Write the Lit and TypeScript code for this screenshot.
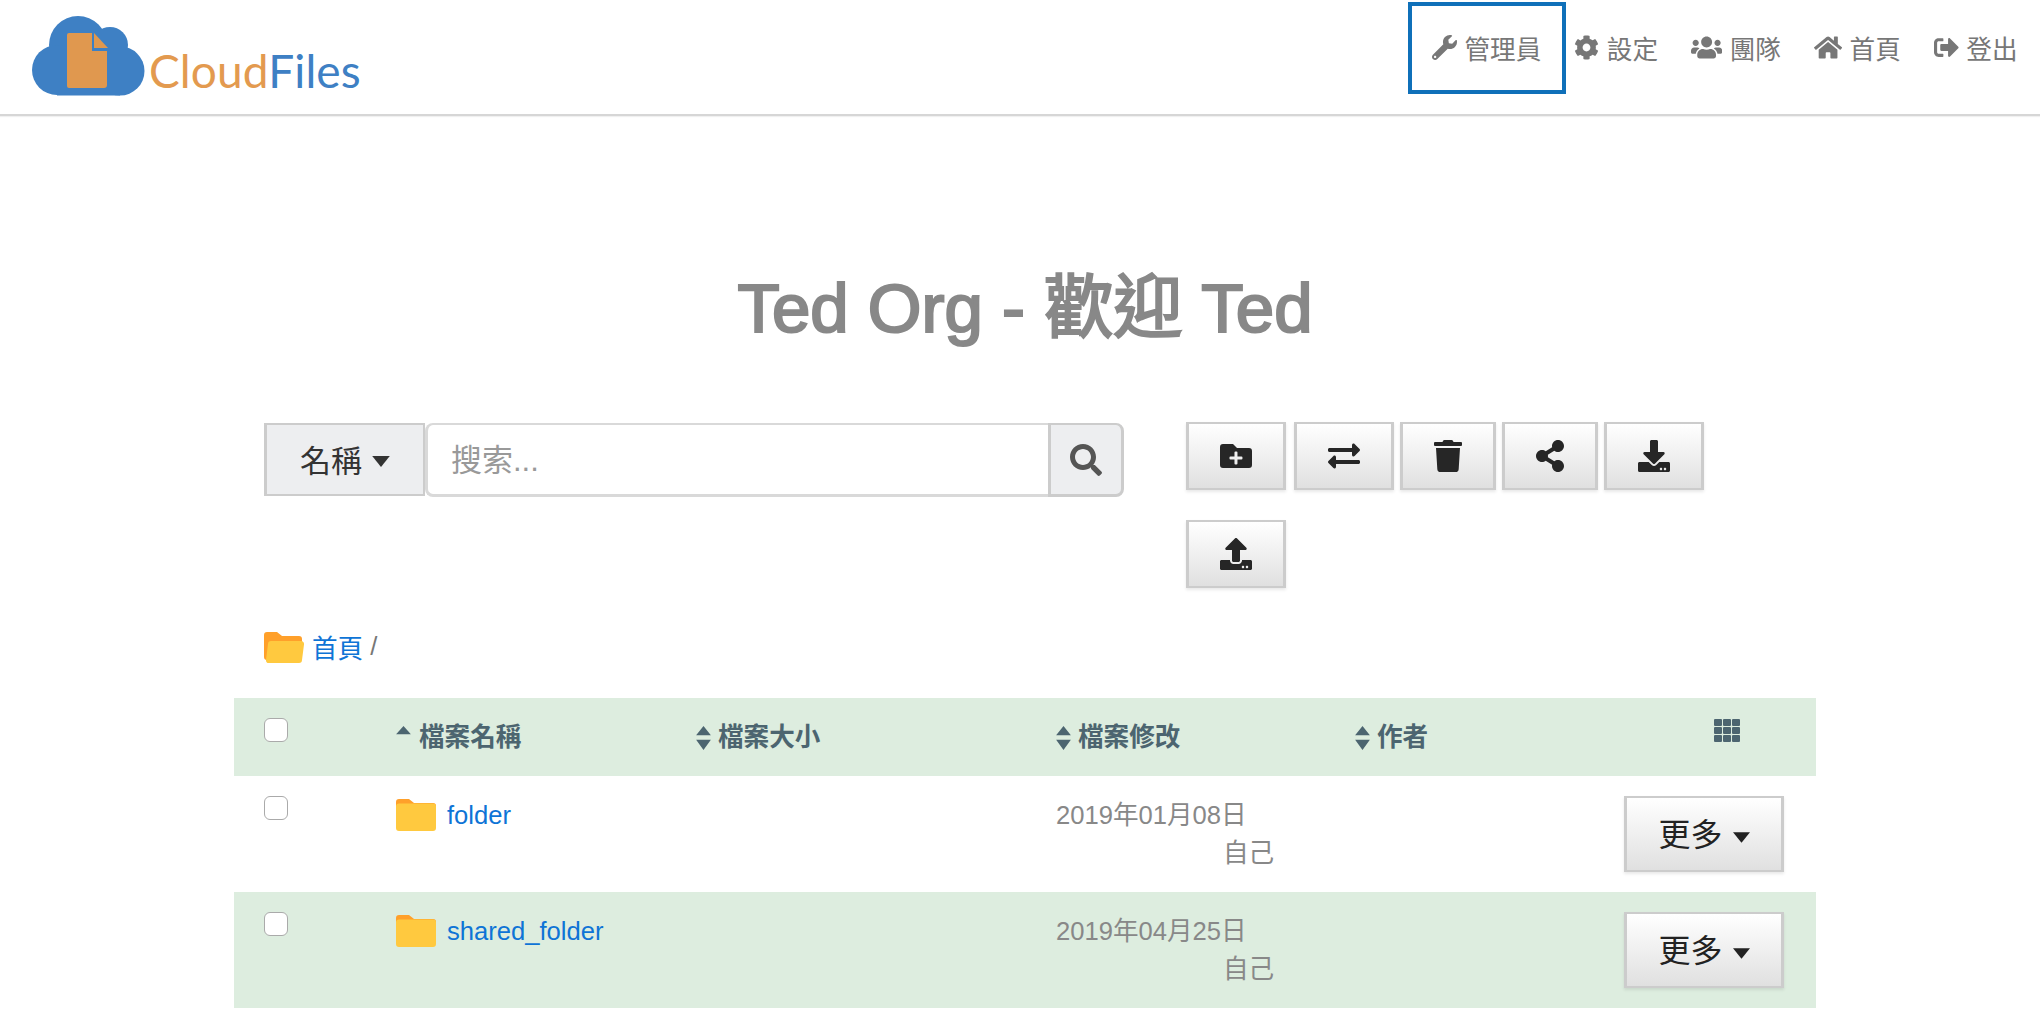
import { LitElement, html, css, svg } from "lit";
import { customElement } from "lit/decorators.js";

const P = {
  wrench: [512, "M507.73 109.1c-2.24-9.03-13.54-12.09-20.12-5.51l-74.36 74.36-67.88-11.31-11.31-67.88 74.36-74.36c6.62-6.62 3.43-17.9-5.66-20.16-47.38-11.74-99.55.91-136.58 37.93-39.64 39.64-50.55 97.1-34.05 147.2L18.74 402.76c-24.99 24.99-24.99 65.51 0 90.5 24.99 24.99 65.51 24.99 90.5 0l213.21-213.21c50.12 16.71 107.47 5.68 147.37-34.22 37.07-37.07 49.7-89.32 37.91-136.73zM64 472c-13.25 0-24-10.75-24-24 0-13.26 10.75-24 24-24s24 10.74 24 24c0 13.25-10.75 24-24 24z"],
  cog: [512, "M487.4 315.7l-42.6-24.6c4.3-23.2 4.3-47 0-70.2l42.6-24.6c4.9-2.8 7.1-8.6 5.5-14-11.1-35.6-30-67.8-54.7-94.6-3.8-4.1-10-5.1-14.8-2.3L380.8 110c-17.9-15.4-38.5-27.3-60.8-35.1V25.8c0-5.6-3.9-10.5-9.4-11.7-36.7-8.2-74.3-7.8-109.2 0-5.5 1.2-9.4 6.1-9.4 11.7V75c-22.2 7.9-42.8 19.8-60.8 35.1L88.7 85.5c-4.9-2.8-11-1.9-14.8 2.3-24.7 26.7-43.6 58.9-54.7 94.6-1.7 5.4.6 11.2 5.5 14L67.3 221c-4.3 23.2-4.3 47 0 70.2l-42.6 24.6c-4.9 2.8-7.1 8.6-5.5 14 11.1 35.6 30 67.8 54.7 94.6 3.8 4.1 10 5.1 14.8 2.3l42.6-24.6c17.9 15.4 38.5 27.3 60.8 35.1v49.2c0 5.6 3.9 10.5 9.4 11.7 36.7 8.2 74.3 7.8 109.2 0 5.5-1.2 9.4-6.1 9.4-11.7v-49.2c22.2-7.9 42.8-19.8 60.8-35.1l42.6 24.6c4.9 2.8 11 1.9 14.8-2.3 24.7-26.7 43.6-58.9 54.7-94.6 1.5-5.5-.7-11.3-5.6-14.1zM256 336c-44.1 0-80-35.9-80-80s35.9-80 80-80 80 35.9 80 80-35.9 80-80 80z"],
  users: [640, "M96 224c35.3 0 64-28.7 64-64s-28.7-64-64-64-64 28.7-64 64 28.7 64 64 64zm448 0c35.3 0 64-28.7 64-64s-28.7-64-64-64-64 28.7-64 64 28.7 64 64 64zm32 32h-64c-17.6 0-33.5 7.1-45.1 18.6 40.3 22.1 68.9 62 75.1 109.4h66c17.7 0 32-14.3 32-32v-32c0-35.3-28.7-64-64-64zm-256 0c61.9 0 112-50.1 112-112S381.9 32 320 32 208 82.1 208 144s50.1 112 112 112zm76.8 32h-8.3c-20.8 10-43.9 16-68.5 16s-47.6-6-68.5-16h-8.3C179.6 288 128 339.6 128 403.2V432c0 26.5 21.5 48 48 48h288c26.5 0 48-21.5 48-48v-28.8c0-63.6-51.6-115.2-115.2-115.2zm-223.7-13.4C161.5 263.1 145.6 256 128 256H64c-35.3 0-64 28.7-64 64v32c0 17.7 14.3 32 32 32h65.9c6.3-47.4 34.9-87.3 75.2-109.4z"],
  home: [576, "M280.37 148.26L96 300.11V464a16 16 0 0 0 16 16l112.06-.29a16 16 0 0 0 15.92-16V368a16 16 0 0 1 16-16h64a16 16 0 0 1 16 16v95.64a16 16 0 0 0 16 16.05L464 480a16 16 0 0 0 16-16V300L295.67 148.26a12.19 12.19 0 0 0-15.3 0zM571.6 251.47L488 182.56V44.05a12 12 0 0 0-12-12h-56a12 12 0 0 0-12 12v72.61L318.47 43a48 48 0 0 0-61 0L4.34 251.47a12 12 0 0 0-1.6 16.9l25.5 31A12 12 0 0 0 45.15 301l235.22-193.74a12.19 12.19 0 0 1 15.3 0L530.9 301a12 12 0 0 0 16.9-1.6l25.5-31a12 12 0 0 0-1.7-16.93z"],
  signout: [512, "M497 273L329 441c-15 15-41 4.5-41-17v-96H152c-13.3 0-24-10.7-24-24v-96c0-13.3 10.7-24 24-24h136V88c0-21.4 25.9-32 41-17l168 168c9.3 9.4 9.3 24.6 0 34zM192 436v-40c0-6.6-5.4-12-12-12H96c-17.7 0-32-14.3-32-32V160c0-17.7 14.3-32 32-32h84c6.6 0 12-5.4 12-12V76c0-6.6-5.4-12-12-12H96c-53 0-96 43-96 96v192c0 53 43 96 96 96h84c6.6 0 12-5.4 12-12z"],
  search: [512, "M505 442.7L405.3 343c-4.5-4.5-10.6-7-17-7H372c27.6-35.3 44-79.7 44-128C416 93.1 322.9 0 208 0S0 93.1 0 208s93.1 208 208 208c48.3 0 92.7-16.4 128-44v16.3c0 6.4 2.5 12.5 7 17l99.7 99.7c9.4 9.4 24.6 9.4 33.9 0l28.3-28.3c9.4-9.4 9.4-24.6.1-34zM208 336c-70.7 0-128-57.2-128-128 0-70.7 57.2-128 128-128 70.7 0 128 57.2 128 128 0 70.7-57.2 128-128 128z"],
  folderPlus: [512, "M464,128H272L208,64H48A48,48,0,0,0,0,112V400a48,48,0,0,0,48,48H464a48,48,0,0,0,48-48V176A48,48,0,0,0,464,128ZM359.5,296a16,16,0,0,1-16,16h-64v64a16,16,0,0,1-16,16h-16a16,16,0,0,1-16-16V312h-64a16,16,0,0,1-16-16V280a16,16,0,0,1,16-16h64V200a16,16,0,0,1,16-16h16a16,16,0,0,1,16,16v64h64a16,16,0,0,1,16,16Z"],
  exchange: [512, "M0 168v-16c0-13.255 10.745-24 24-24h360V80c0-21.367 25.899-32.042 40.971-16.971l80 80c9.372 9.373 9.372 24.569 0 33.941l-80 80C409.956 272.057 384 261.456 384 240v-48H24c-13.255 0-24-10.745-24-24zm488 152H128v-48c0-21.314-25.862-32.08-40.971-16.971l-80 80c-9.372 9.373-9.372 24.569 0 33.941l80 80C102.057 463.997 128 453.437 128 432v-48h360c13.255 0 24-10.745 24-24v-16c0-13.255-10.745-24-24-24z"],
  trash: [448, "M432 32H312l-9.4-18.7A24 24 0 0 0 281.1 0H166.8a23.72 23.72 0 0 0-21.4 13.3L136 32H16A16 16 0 0 0 0 48v32a16 16 0 0 0 16 16h416a16 16 0 0 0 16-16V48a16 16 0 0 0-16-16zM53.2 467a48 48 0 0 0 47.9 45h245.8a48 48 0 0 0 47.9-45L416 128H32z"],
  share: [448, "M352 320c-22.608 0-43.387 7.819-59.79 20.895l-102.486-64.054a96.551 96.551 0 0 0 0-41.683l102.486-64.054C308.613 184.181 329.392 192 352 192c53.019 0 96-42.981 96-96S405.019 0 352 0s-96 42.981-96 96c0 7.158.79 14.13 2.276 20.841L155.79 180.895C139.387 167.819 118.608 160 96 160c-53.019 0-96 42.981-96 96s42.981 96 96 96c22.608 0 43.387-7.819 59.79-20.895l102.486 64.054A96.301 96.301 0 0 0 256 416c0 53.019 42.981 96 96 96s96-42.981 96-96-42.981-96-96-96z"],
  download: [512, "M216 0h80c13.3 0 24 10.7 24 24v168h87.7c17.8 0 26.7 21.5 14.1 34.1L269.7 378.3c-7.5 7.5-19.8 7.5-27.3 0L90.1 226.1c-12.6-12.6-3.7-34.1 14.1-34.1H192V24c0-13.3 10.7-24 24-24zm296 376v112c0 13.3-10.7 24-24 24H24c-13.3 0-24-10.7-24-24V376c0-13.3 10.7-24 24-24h146.7l49 49c20.1 20.1 52.5 20.1 72.6 0l49-49H488c13.3 0 24 10.7 24 24zm-124 88c0-11-9-20-20-20s-20 9-20 20 9 20 20 20 20-9 20-20zm64 0c0-11-9-20-20-20s-20 9-20 20 9 20 20 20 20-9 20-20z"],
  upload: [512, "M296 384h-80c-13.3 0-24-10.7-24-24V192h-87.7c-17.8 0-26.7-21.5-14.1-34.1L242.3 5.7c7.5-7.5 19.8-7.5 27.3 0l152.2 152.2c12.6 12.6 3.7 34.1-14.1 34.1H320v168c0 13.3-10.7 24-24 24zm216-8v112c0 13.3-10.7 24-24 24H24c-13.3 0-24-10.7-24-24V376c0-13.3 10.7-24 24-24h136v8c0 30.9 25.1 56 56 56h80c30.9 0 56-25.1 56-56v-8h136c13.3 0 24 10.7 24 24zm-124 88c0-11-9-20-20-20s-20 9-20 20 9 20 20 20 20-9 20-20zm64 0c0-11-9-20-20-20s-20 9-20 20 9 20 20 20 20-9 20-20z"],
} as const;

const icon = (n: keyof typeof P, cls = "") => {
  const [w, d] = P[n];
  return html`<svg class="ic ${cls}" viewBox="0 0 ${w} 512" fill="currentColor"><path d=${d}></path></svg>`;
};

const caret = (cls = "") => html`<svg class="caret ${cls}" viewBox="0 0 16 10"><path d="M0 0h16L8 10z" fill="currentColor"></path></svg>`;

const sortBoth = html`<svg class="sort" viewBox="0 0 16 26"><path d="M8 0l8 10H0zM0 15h16l-8 11z" fill="currentColor"></path></svg>`;
const sortUp = html`<svg class="sort" viewBox="0 0 16 26"><path d="M8 0l8 9H0z" fill="currentColor"></path></svg>`;

const folderClosed = html`<svg class="folder" viewBox="0 0 40 32">
  <path d="M3 0h10l5 4h19a3 3 0 0 1 3 3v6H0V3a3 3 0 0 1 3-3z" fill="#ffa02a"></path>
  <path d="M3 4.500h34a3 3 0 0 1 3 3V29a3 3 0 0 1-3 3H3a3 3 0 0 1-3-3V7.500a3 3 0 0 1 3-3z" fill="#ffc93f"></path>
</svg>`;
const folderOpen = html`<svg class="crumb-folder" viewBox="0 0 40 31">
  <path d="M3 0h10l5 4h17a3 3 0 0 1 3 3v21H3a3 3 0 0 1-3-3V3a3 3 0 0 1 3-3z" fill="#ffa02a"></path>
  <path d="M7 9h30a3 3 0 0 1 3 3.500L38 28a3 3 0 0 1-3 3H3.500a3 3 0 0 1-1.500-3L4 12a3 3 0 0 1 3-3z" fill="#ffc93f"></path>
</svg>`;

@customElement("app-root")
export class AppRoot extends LitElement {
  static styles = css`
    :host {
      display: block;
      font-family: "Liberation Sans", "Noto Sans CJK TC", sans-serif;
      color: #333;
      background: #fff;
      min-height: 1024px;
    }
    .ic { display: block; height: 1em; flex: none; }
    a { text-decoration: none; color: #0e74d6; }

    header {
      height: 114px;
      display: flex;
      justify-content: space-between;
      border-bottom: 2px solid #d6d6d6;
      box-shadow: 0 1px 1px rgba(0,0,0,.06);
    }
    .brand { display: flex; align-items: flex-start; padding: 16px 0 0 32px; }
    .cloud { width: 113px; height: 80px; flex: none; }
    .wordmark {
      font-family: Lato, sans-serif;
      font-size: 46px;
      line-height: 56px;
      margin: 27px 0 0 4px;
      letter-spacing: .1px;
      color: #e39a4f;
    }
    .wordmark span { color: #3e80c4; }
    nav { display: flex; align-items: flex-start; padding: 10px 6px 0 0; }
    .nav-item {
      height: 76px;
      box-sizing: border-box;
      padding: 0 16.500px 2px;
      display: flex;
      align-items: center;
      gap: 7.500px;
      font-size: 25.600px;
      color: #777;
    }
    .nav-item .ic { height: 25px; }
    .nav-item.active { outline: 4px solid #0f70b9; outline-offset: 4.500px; }

    main { padding: 0 224px 0 234px; }
    h1 {
      margin: 0;
      padding-top: 153px;
      height: 154px;
      box-sizing: content-box;
      text-align: center;
      font-size: 69px;
      line-height: 80px;
      font-weight: 400;
      -webkit-text-stroke: 2.200px #888;
      color: #888;
    }
    .tools { display: flex; align-items: flex-start; padding-left: 30px; }
    .search { display: flex; width: 860px; height: 74px; flex: none; }
    .dropdown {
      width: 161px;
      height: 73px;
      box-sizing: border-box;
      padding-bottom: 2px;
      display: flex;
      align-items: center;
      justify-content: center;
      gap: 10px;
      background: #edeef0;
      border: solid #ccc;
      border-width: 2px 2px 2px 3px;
      font-size: 31px;
      color: #333;
    }
    .dropdown .caret { width: 18px; height: 11px; margin-top: 6px; }
    .search input {
      flex: 1;
      min-width: 0;
      margin: 0;
      box-sizing: border-box;
      height: 74px;
      border: solid #d9d9d9;
      border-width: 2px 0 3px 3px;
      border-radius: 8px 0 0 8px;
      padding: 2px 23px 0;
      font: 31px "Liberation Sans", "Noto Sans CJK TC", sans-serif;
      outline: none;
      background: #fff;
    }
    .search input::placeholder { color: #999; }
    .addon {
      width: 76px;
      box-sizing: border-box;
      display: flex;
      align-items: center;
      justify-content: center;
      background: #edeef0;
      border: solid #ccc;
      border-width: 2px 3px 3px;
      border-radius: 0 8px 8px 0;
      color: #555;
    }
    .addon .ic { height: 32px; }
    .actions {
      display: flex;
      flex-wrap: wrap;
      width: 530px;
      margin: -1px 0 0 62px;
      gap: 30px 6px;
    }
    .btn {
      height: 68px;
      box-sizing: border-box;
      display: flex;
      align-items: center;
      justify-content: center;
      border: solid #ccc;
      border-width: 2px 3px;
      background: linear-gradient(#fff, #e0e0e0);
      box-shadow: 0 2px 3px rgba(0,0,0,.09);
      color: #262626;
    }
    .btn .ic { height: 32px; }
    .w100 { width: 100px; }
    .w96 { width: 96px; }
    .first { margin-right: 2px; }
    .crumbs {
      display: flex;
      align-items: center;
      height: 32px;
      margin: 43px 0 35px;
      padding-left: 30px;
      font-size: 25.600px;
      color: #777;
    }
    .crumbs a, .crumbs b { margin-top: -2px; }
    .crumb-folder { width: 40px; height: 31px; margin: 1px 8px 0 0; flex: none; }
    .crumbs b { font-weight: 400; margin-left: 7px; }

    .row {
      display: grid;
      grid-template-columns: 162px 300px 360px 299px 1fr;
    }
    .row.alt { background: #ddeddf; }
    .head { height: 78px; color: #4c6570; font-size: 25.600px; font-weight: 700; }
    .body { height: 116px; }
    .cell { display: flex; align-items: flex-start; }
    .check {
      appearance: none;
      -webkit-appearance: none;
      width: 24px;
      height: 24px;
      margin: 20px 0 0 30px;
      background: #fff;
      border: 1.500px solid #aaa;
      border-radius: 6px;
      box-sizing: border-box;
    }
    .th { padding-top: 27px; gap: 7px; line-height: 25px; align-items: center; height: 25px; }
    .th-last { justify-content: space-between; }
    .th-label { display: flex; align-items: center; gap: 7px; }
    .sort { width: 15px; height: 24px; flex: none; }
    .th.name { gap: 8px; }
    .grid-ic {
      display: grid;
      grid-template-columns: repeat(3, 8px);
      grid-auto-rows: 7px;
      gap: 1px;
      align-self: flex-start;
      margin: -6px 76px 0 0;
      color: #4c6570;
    }
    .grid-ic i { display: block; background: currentColor; border-radius: 1px; }
    .name-cell { padding-top: 23px; gap: 11px; font-size: 25.600px; line-height: 32px; }
    .folder { width: 40px; height: 32px; flex: none; }
    .date { display: block; padding-top: 23px; font-size: 25.600px; line-height: 32px; color: #888; }
    .date div + div { margin: 6px 0 0 167px; }
    .more {
      width: 160px;
      height: 76px;
      margin: 20px 32px 0 0;
      justify-self: end;
      padding-bottom: 4px;
      font-size: 32px;
      gap: 10px;
      color: #222;
    }
    .more .caret { width: 17px; height: 11px; margin-top: 10px; }
  `;

  private row(name: string, date: string, alt: boolean) {
    return html`<div class="row body ${alt ? "alt" : ""}">
      <div class="cell"><input class="check" type="checkbox" /></div>
      <div class="cell name-cell">${folderClosed}<a href="#">${name}</a></div>
      <div></div>
      <div class="cell date"><div>${date}</div><div>自己</div></div>
      <div class="btn more">更多${caret()}</div>
    </div>`;
  }

  render() {
    const cloud = svg`
      <circle cx="46" cy="29" r="29" fill="#3e80c4"></circle>
      <circle cx="78" cy="29" r="18" fill="#3e80c4"></circle>
      <circle cx="25" cy="54" r="25" fill="#3e80c4"></circle>
      <circle cx="88" cy="55" r="24.500" fill="#3e80c4"></circle>
      <rect x="25" y="30" width="63" height="49.500" fill="#3e80c4"></rect>
      <path d="M37 17h23v18h15v34a3 3 0 0 1-3 3H37a2 2 0 0 1-2-2V19a2 2 0 0 1 2-2z" fill="#e0984f"></path>
      <path d="M62 17l14 15H62z" fill="#e0984f"></path>`;
    return html`
      <header>
        <div class="brand">
          <svg class="cloud" viewBox="0 0 113 80">${cloud}</svg>
          <div class="wordmark">Cloud<span>Files</span></div>
        </div>
        <nav>
          <div class="nav-item active">${icon("wrench")}管理員</div>
          <div class="nav-item">${icon("cog")}設定</div>
          <div class="nav-item">${icon("users")}團隊</div>
          <div class="nav-item">${icon("home")}首頁</div>
          <div class="nav-item">${icon("signout")}登出</div>
        </nav>
      </header>
      <main>
        <h1>Ted Org - 歡迎 Ted</h1>
        <div class="tools">
          <div class="search">
            <div class="dropdown">名稱${caret()}</div>
            <input type="text" placeholder="搜索..." />
            <div class="addon">${icon("search")}</div>
          </div>
          <div class="actions">
            <div class="btn w100 first">${icon("folderPlus")}</div>
            <div class="btn w100">${icon("exchange")}</div>
            <div class="btn w96">${icon("trash")}</div>
            <div class="btn w96">${icon("share")}</div>
            <div class="btn w100">${icon("download")}</div>
            <div class="btn w100">${icon("upload")}</div>
          </div>
        </div>
        <div class="crumbs">${folderOpen}<a href="#">首頁</a><b>/</b></div>
        <div class="row head alt">
          <div class="cell"><input class="check" type="checkbox" /></div>
          <div class="cell th name">${sortUp}檔案名稱</div>
          <div class="cell th">${sortBoth}檔案大小</div>
          <div class="cell th">${sortBoth}檔案修改</div>
          <div class="cell th th-last">
            <span class="th-label">${sortBoth}作者</span>
            <div class="grid-ic">${Array.from({ length: 9 }, () => html`<i></i>`)}</div>
          </div>
        </div>
        ${this.row("folder", "2019年01月08日", false)}
        ${this.row("shared_folder", "2019年04月25日", true)}
      </main>
    `;
  }
}
